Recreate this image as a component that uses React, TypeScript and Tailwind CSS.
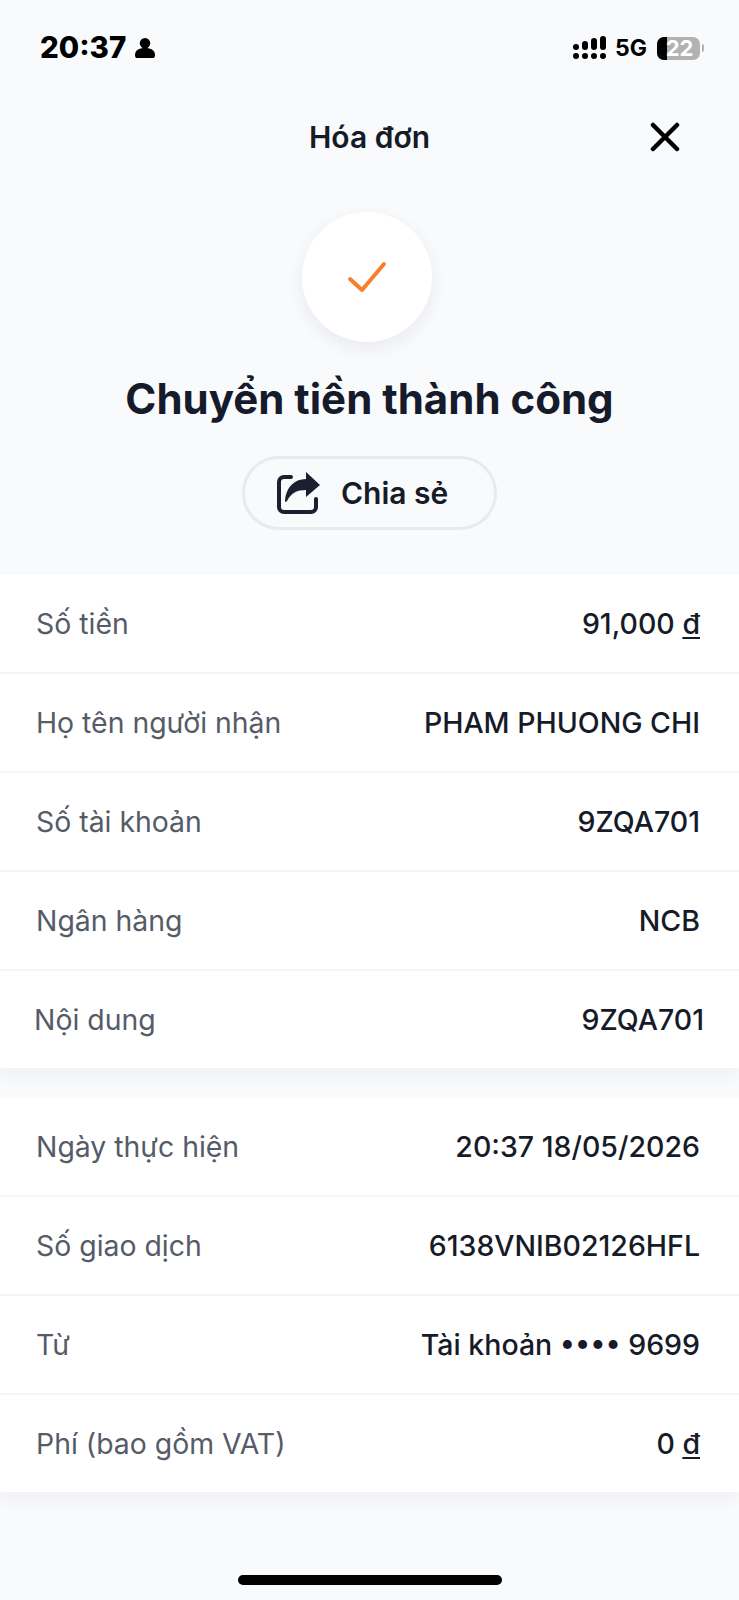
function Row({ label, value, last, shift }: { label: string; value: React.ReactNode; last?: boolean; shift?: boolean }) {
  return (
    <div className={`flex items-center justify-between pb-[1px] pl-[36px] pr-[39px] pt-[3px] ${last ? "h-[97px]" : "h-[99px] border-b-2 border-[#f4f5f6]"}`}>
      <span className={`text-[28.4px] text-[#565b68] ${shift ? "-ml-[2px]" : ""}`}>{label}</span>
      <span className={`text-[28.5px] font-[450] text-[#161b28] ${shift ? "-mr-[4px]" : ""}`}>{value}</span>
    </div>
  );
}

const dong = <span className="underline decoration-2 underline-offset-[3px]">đ</span>;

function StatusBar() {
  return (
    <div className="flex h-[96px] items-center justify-between pl-[40px] pr-[35px] text-black">
      <div className="flex items-center gap-[9px]">
        <span className="text-[29.5px] font-extrabold leading-none">20:37</span>
        <svg width="20" height="20" viewBox="0 0 21 21" fill="currentColor" preserveAspectRatio="none">
          <circle cx="10.5" cy="5.5" r="5.5" />
          <path d="M0 18c0-5 4-7.5 10.5-7.5S21 13 21 18c0 2-1 3-2.5 3h-16C1 21 0 20 0 18z" />
        </svg>
      </div>
      <div className="flex items-center">
        <svg width="33" height="24" viewBox="0 0 33 24" fill="currentColor">
          <rect x="0" y="8" width="6" height="6" rx="3" />
          <rect x="9" y="5" width="6" height="9" rx="3" />
          <rect x="18" y="2" width="6" height="12" rx="3" />
          <rect x="27" y="0" width="6" height="14" rx="3" />
          <circle cx="3" cy="20" r="3" />
          <circle cx="12" cy="20" r="3" />
          <circle cx="21" cy="20" r="3" />
          <circle cx="30" cy="20" r="3" />
        </svg>
        <span className="ml-[9px] text-[23px] font-bold leading-none">5G</span>
        <div className="relative ml-[10px] flex h-[23px] w-[43px] items-center justify-center rounded-[7px] bg-[#b2b2b2]">
          <div className="absolute inset-y-0 left-0 w-[10px] rounded-l-[7px] bg-black" />
          <span className="relative ml-[2px] text-[22px] font-bold leading-none text-white">22</span>
        </div>
        <div className="ml-[2px] h-[8px] w-[2px] rounded-r-full bg-[#b2b2b2]" />
      </div>
    </div>
  );
}

function Header() {
  return (
    <div className="flex h-[84px] items-center justify-between pb-[2px] pl-[309px] pr-[59px]">
      <span className="text-[30px] font-semibold leading-none text-[#161b28]">Hóa đơn</span>
      <svg width="30" height="30" viewBox="0 0 30 30" fill="none" stroke="#000" strokeWidth="4.5" strokeLinecap="round">
        <path d="M3 3l24 24M27 3L3 27" />
      </svg>
    </div>
  );
}

export default function App() {
  return (
    <div className="flex h-[1600px] w-[739px] flex-col overflow-hidden bg-[#f9fafc] font-['Inter',sans-serif]">
      <StatusBar />
      <Header />
      <div className="flex flex-col items-center">
        <div className="mr-[6px] mt-[32px] flex h-[130px] w-[130px] items-center justify-center rounded-full bg-white shadow-[0_6px_18px_rgba(20,30,50,0.07)]">
          <svg width="40" height="33" viewBox="0 0 40 33" fill="none" stroke="#f97f2c" strokeWidth="4" strokeLinecap="round" strokeLinejoin="round">
            <path d="M3 18l12 11L37 3" />
          </svg>
        </div>
        <h1 className="mt-[27px] text-[42px] font-bold leading-[60px] text-[#161b2b]">Chuyển tiền thành công</h1>
        <div className="mt-[27px] flex h-[74px] w-[255px] items-center gap-[20px] rounded-full border-[3px] border-[#e8eaec] pl-[32px]">
          <svg width="44" height="42" viewBox="0 0 44 42" fill="#1a2030">
            <path d="M14 5H7a5 5 0 0 0-5 5v25a5 5 0 0 0 5 5h27a5 5 0 0 0 5-5v-8" fill="none" stroke="#1a2030" strokeWidth="4" strokeLinecap="round" />
            <path d="M29 0l14 13-14 12v-7c-9 0-15 3-19 11-1 2-2 1-2-1 1-12 9-21 21-21z" />
          </svg>
          <span className="text-[30px] font-semibold leading-none text-[#161b28]">Chia sẻ</span>
        </div>
      </div>
      <div className="mt-[45px] flex flex-col bg-white shadow-[0_10px_14px_rgba(20,30,50,0.035)]">
        <Row label="Số tiền" value={<>91,000 {dong}</>} />
        <Row label="Họ tên người nhận" value="PHAM PHUONG CHI" />
        <Row label="Số tài khoản" value="9ZQA701" />
        <Row label="Ngân hàng" value="NCB" />
        <Row label="Nội dung" value="9ZQA701" last shift />
      </div>
      <div className="mt-[30px] flex flex-col bg-white shadow-[0_10px_14px_rgba(20,30,50,0.035)]">
        <Row label="Ngày thực hiện" value="20:37 18/05/2026" />
        <Row label="Số giao dịch" value="6138VNIB02126HFL" />
        <Row label="Từ" value="Tài khoản •••• 9699" />
        <Row label="Phí (bao gồm VAT)" value={<>0 {dong}</>} last />
      </div>
      <div className="mb-[15px] mt-auto h-[10px] w-[264px] self-center rounded-full bg-black" />
    </div>
  );
}
